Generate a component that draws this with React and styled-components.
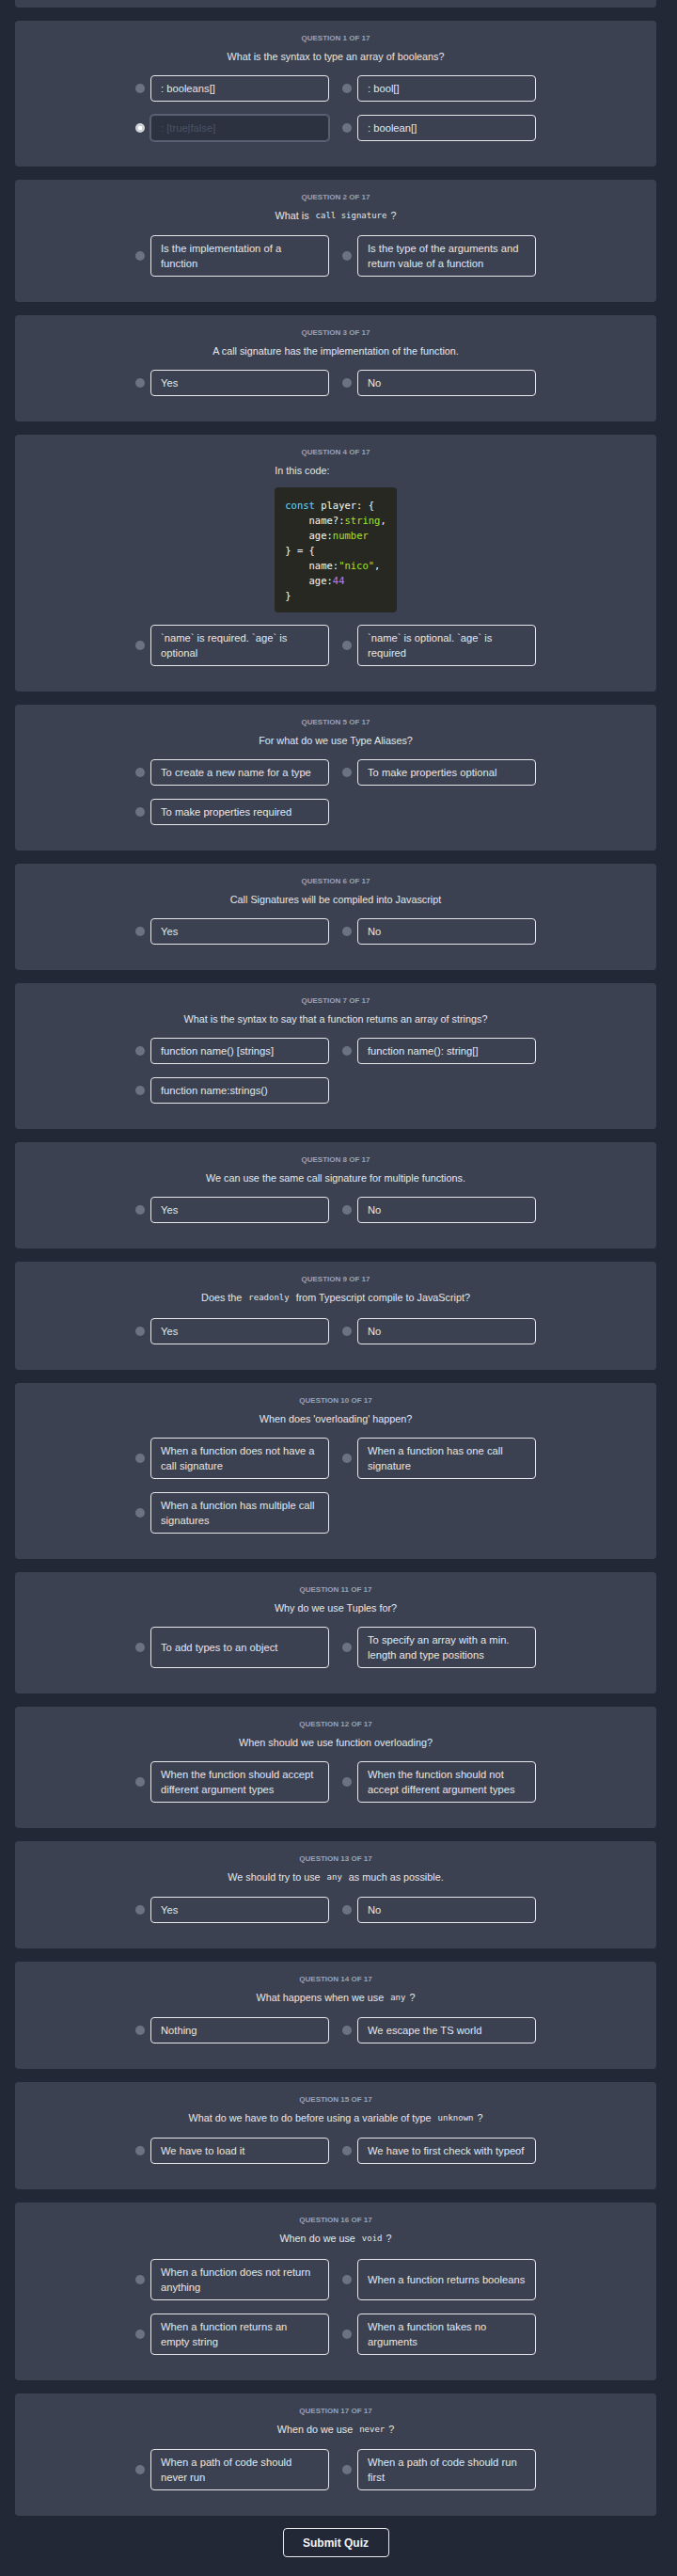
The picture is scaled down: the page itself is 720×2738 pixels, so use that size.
import React from "react";
import styled, { createGlobalStyle, css } from "styled-components";

const GlobalStyle = createGlobalStyle`
  html, body {
    margin: 0;
    padding: 0;
    background: #232836;
  }
  body {
    font-family: "Liberation Sans", Arial, sans-serif;
    color: #e5e7eb;
  }
  * { box-sizing: border-box; }
`;

const Page = styled.main`
  width: 682px;
  margin-left: 16px;
  padding-bottom: 19px;
  display: flex;
  flex-direction: column;
`;

const CardList = styled.div`
  display: flex;
  flex-direction: column;
  gap: 14px;
`;

const PrevCardTail = styled.div`
  height: 8px;
  background: #3b4151;
  border-radius: 0 0 4px 4px;
`;

const Card = styled.section`
  background: #3b4151;
  border-radius: 4px;
  padding: 12px 16px 27px;
  display: flex;
  flex-direction: column;
  align-items: center;
`;

const Label = styled.div`
  font-size: 8px;
  font-weight: 700;
  line-height: 13px;
  color: #9ca3af;
  text-transform: uppercase;
  margin-bottom: 6px;
`;

const Question = styled.div`
  font-size: 10.8px;
  line-height: 14px;
  color: #e5e7eb;
  margin-bottom: 13px;
  text-align: center;
`;

const CodeQuestion = styled.div`
  text-align: left;
`;

const InlineCode = styled.code`
  display: inline-block;
  vertical-align: top;
  line-height: 15.3px;
  font-family: "DejaVu Sans Mono", "Liberation Mono", monospace;
  font-size: 9px;
  padding: 0 4px;
`;

const CodeBlock = styled.pre`
  margin: 11px 0 0;
  background: #272822;
  border-radius: 4px;
  padding: 11px 11px 10px;
  font-family: "DejaVu Sans Mono", "Liberation Mono", monospace;
  font-size: 10.5px;
  line-height: 16px;
  color: #f8f8f2;
`;

const Tok = styled.span`
  color: ${(p) =>
    p.$kind === "kw" ? "#66d9ef" : p.$kind === "num" ? "#ae81ff" : "#a6e22e"};
`;

const Options = styled.div`
  display: grid;
  grid-template-columns: repeat(2, 206px);
  column-gap: 14px;
  row-gap: 14px;
`;

const Option = styled.label`
  display: flex;
  align-items: center;
  gap: 6px;
`;

const Radio = styled.span`
  flex: none;
  width: 10px;
  height: 10px;
  border-radius: 50%;
  background: #6b7280;
  ${(p) =>
    p.$checked &&
    css`
      background: #cfd3da;
      background-image: radial-gradient(circle, #ffffff 0 2px, #cfd3da 2.5px);
    `}
`;

const Choice = styled.div`
  flex: 1;
  align-self: stretch;
  min-height: 28px;
  display: flex;
  align-items: center;
  padding: 5px 10px;
  border: 1px solid #e5e7eb;
  border-radius: 4px;
  font-size: 11.2px;
  line-height: 16px;
  color: #e5e7eb;
  white-space: pre-line;
  ${(p) =>
    p.$disabled &&
    css`
      background: #2d3240;
      border-color: #596071;
      box-shadow: 0 0 0 1px #596071;
      color: #4b5263;
    `}
`;

const SubmitRow = styled.div`
  margin-top: 13px;
  display: flex;
  justify-content: center;
`;

const SubmitButton = styled.button`
  width: 113px;
  height: 31px;
  background: transparent;
  border: 1px solid #e5e7eb;
  border-radius: 4px;
  color: #f3f4f6;
  font-family: "Liberation Sans", Arial, sans-serif;
  font-weight: 700;
  font-size: 12px;
  cursor: pointer;
`;

const C = ({ children }) => <InlineCode>{children}</InlineCode>;

const questions = [
  {
    q: "What is the syntax to type an array of booleans?",
    options: [": booleans[]", ": bool[]", ": [true|false]", ": boolean[]"],
    disabled: 2,
  },
  {
    q: (
      <>
        What is <C>call signature</C>?
      </>
    ),
    options: [
      "Is the implementation of a function",
      "Is the type of the arguments and return value of a function",
    ],
  },
  {
    q: "A call signature has the implementation of the function.",
    options: ["Yes", "No"],
  },
  {
    code: true,
    options: [
      "`name` is required. `age` is optional",
      "`name` is optional. `age` is required",
    ],
  },
  {
    q: "For what do we use Type Aliases?",
    options: [
      "To create a new name for a type",
      "To make properties optional",
      "To make properties required",
    ],
  },
  {
    q: "Call Signatures will be compiled into Javascript",
    options: ["Yes", "No"],
  },
  {
    q: "What is the syntax to say that a function returns an array of strings?",
    options: [
      "function name() [strings]",
      "function name(): string[]",
      "function name:strings()",
    ],
  },
  {
    q: "We can use the same call signature for multiple functions.",
    options: ["Yes", "No"],
  },
  {
    q: (
      <>
        Does the <C>readonly</C> from Typescript compile to JavaScript?
      </>
    ),
    options: ["Yes", "No"],
  },
  {
    q: "When does 'overloading' happen?",
    options: [
      "When a function does not have a call signature",
      "When a function has one call signature",
      "When a function has multiple call signatures",
    ],
  },
  {
    q: "Why do we use Tuples for?",
    options: [
      "To add types to an object",
      "To specify an array with a min. length and type positions",
    ],
  },
  {
    q: "When should we use function overloading?",
    options: [
      "When the function should accept different argument types",
      "When the function should not accept different argument types",
    ],
  },
  {
    q: (
      <>
        We should try to use <C>any</C> as much as possible.
      </>
    ),
    options: ["Yes", "No"],
  },
  {
    q: (
      <>
        What happens when we use <C>any</C>?
      </>
    ),
    options: ["Nothing", "We escape the TS world"],
  },
  {
    q: (
      <>
        What do we have to do before using a variable of type <C>unknown</C>?
      </>
    ),
    options: ["We have to load it", "We have to first check with typeof"],
  },
  {
    q: (
      <>
        When do we use <C>void</C>?
      </>
    ),
    options: [
      "When a function does not return anything",
      "When a function returns booleans",
      "When a function returns an\nempty string",
      "When a function takes no arguments",
    ],
  },
  {
    q: (
      <>
        When do we use <C>never</C>?
      </>
    ),
    options: [
      "When a path of code should never run",
      "When a path of code should run first",
    ],
  },
];

const PlayerCode = () => (
  <CodeBlock>
    <Tok $kind="kw">const</Tok> player: {"{"}
    {"\n    "}name?:<Tok>string</Tok>,
    {"\n    "}age:<Tok>number</Tok>
    {"\n"}
    {"} = {"}
    {"\n    "}name:<Tok>"nico"</Tok>,
    {"\n    "}age:<Tok $kind="num">44</Tok>
    {"\n"}
    {"}"}
  </CodeBlock>
);

function QuestionCard({ item, index, total }) {
  return (
    <Card>
      <Label>
        Question {index + 1} of {total}
      </Label>
      <Question>
        {item.code ? (
          <CodeQuestion>
            In this code:
            <PlayerCode />
          </CodeQuestion>
        ) : (
          item.q
        )}
      </Question>
      <Options>
        {item.options.map((opt, i) => {
          const disabled = item.disabled === i;
          return (
            <Option key={i}>
              <Radio $checked={disabled} />
              <Choice $disabled={disabled}>{opt}</Choice>
            </Option>
          );
        })}
      </Options>
    </Card>
  );
}

export default function App() {
  return (
    <>
      <GlobalStyle />
      <Page>
        <CardList>
          <PrevCardTail />
          {questions.map((item, i) => (
            <QuestionCard
              key={i}
              item={item}
              index={i}
              total={questions.length}
            />
          ))}
        </CardList>
        <SubmitRow>
          <SubmitButton>Submit Quiz</SubmitButton>
        </SubmitRow>
      </Page>
    </>
  );
}
